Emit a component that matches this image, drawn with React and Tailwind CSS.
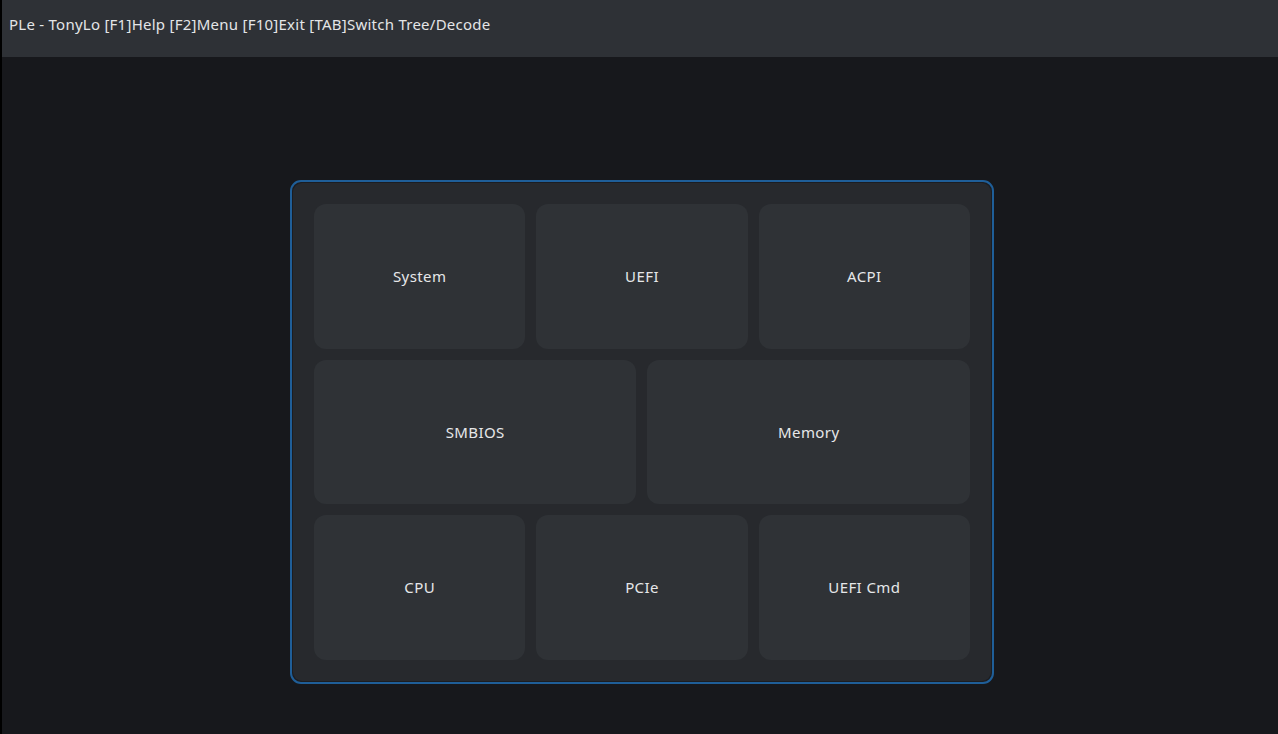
const tiles = [
  { label: "System", span: "col-span-2" },
  { label: "UEFI", span: "col-span-2" },
  { label: "ACPI", span: "col-span-2" },
  { label: "SMBIOS", span: "col-span-3" },
  { label: "Memory", span: "col-span-3" },
  { label: "CPU", span: "col-span-2" },
  { label: "PCIe", span: "col-span-2" },
  { label: "UEFI Cmd", span: "col-span-2" },
];

const App = () => {
  return (
    <div
      className="h-[734px] w-full bg-[#17181c] border-l-2 border-black flex flex-col text-[#e4e5e7]"
      style={{ fontFamily: '"Noto Sans", "Open Sans", sans-serif' }}
    >
      <header className="h-[57px] bg-[#2e3136] px-[7px] pt-[13px] text-[15px] leading-[22px] tracking-[0.25px]">
        PLe - TonyLo [F1]Help [F2]Menu [F10]Exit [TAB]Switch Tree/Decode
      </header>

      <main className="flex-1 flex justify-center pt-[123px] pl-1">
        <div className="w-[704px] h-[504px] rounded-[11px] border-2 border-[#1f5e98] bg-[#1c1d21] p-px">
          <div className="h-full rounded-[9px] bg-[#27292d] p-[21px]">
            <div className="grid grid-cols-6 grid-rows-3 gap-x-[11px] gap-y-[11px] h-full">
              {tiles.map((tile) => (
                <button
                  key={tile.label}
                  className={`${tile.span} rounded-xl bg-[#2f3236] flex items-center justify-center text-[15px] tracking-[0.4px] text-[#e6e7e9] hover:bg-[#363a3f] transition-colors`}
                >
                  {tile.label}
                </button>
              ))}
            </div>
          </div>
        </div>
      </main>
    </div>
  );
};

export default App;
